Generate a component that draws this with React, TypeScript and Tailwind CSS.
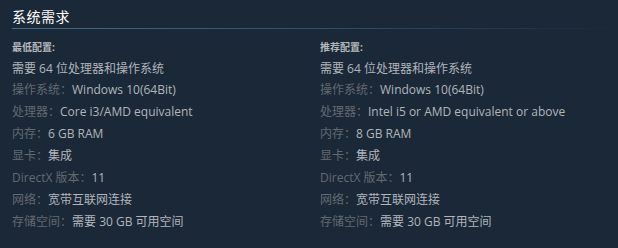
import React from "react";

type Row = { label?: string; value: string };

const left: Row[] = [
  { value: "需要 64 位处理器和操作系统" },
  { label: "操作系统：", value: "Windows 10(64Bit)" },
  { label: "处理器：", value: "Core i3/AMD equivalent" },
  { label: "内存：", value: "6 GB RAM" },
  { label: "显卡：", value: "集成" },
  { label: "DirectX 版本：", value: "11" },
  { label: "网络：", value: "宽带互联网连接" },
  { label: "存储空间：", value: "需要 30 GB 可用空间" },
];

const right: Row[] = [
  { value: "需要 64 位处理器和操作系统" },
  { label: "操作系统：", value: "Windows 10(64Bit)" },
  { label: "处理器：", value: "Intel i5 or AMD equivalent or above" },
  { label: "内存：", value: "8 GB RAM" },
  { label: "显卡：", value: "集成" },
  { label: "DirectX 版本：", value: "11" },
  { label: "网络：", value: "宽带互联网连接" },
  { label: "存储空间：", value: "需要 30 GB 可用空间" },
];

function Column({ title, rows, className }: { title: string; rows: Row[]; className: string }) {
  return (
    <div className={`${className} flex flex-col`}>
      <div className="text-[10px] leading-[14px] font-bold text-[#b4b9be]">{title}</div>
      <ul className="mt-[4px] flex flex-col text-[12px] text-[#b0b6bc]">
        {rows.map((r, i) => (
          <li key={i} className={`${i === 0 ? "leading-[21px]" : "leading-[22px]"} whitespace-nowrap`}>
            {r.label && <span className="text-[#626a71]">{r.label}</span>}
            <span>{r.value}</span>
          </li>
        ))}
      </ul>
    </div>
  );
}

export default function App() {
  return (
    <div
      className="w-[618px] h-[248px] bg-[#1b2838] pl-3 pt-2 overflow-hidden"
      style={{ fontFamily: '"Open Sans", "Noto Sans CJK SC", sans-serif' }}
    >
      <h2 className="h-[20px] leading-[18px] text-[14px] text-white font-normal tracking-[0.5px]">系统需求</h2>
      <div className="h-px w-full bg-gradient-to-r from-[#3d6c8d] via-[#2f5270] to-[#1b2838]" />
      <div className="mt-[11px] flex">
        <Column title="最低配置:" rows={left} className="w-[308px] shrink-0" />
        <Column title="推荐配置:" rows={right} className="flex-1 min-w-0" />
      </div>
    </div>
  );
}
